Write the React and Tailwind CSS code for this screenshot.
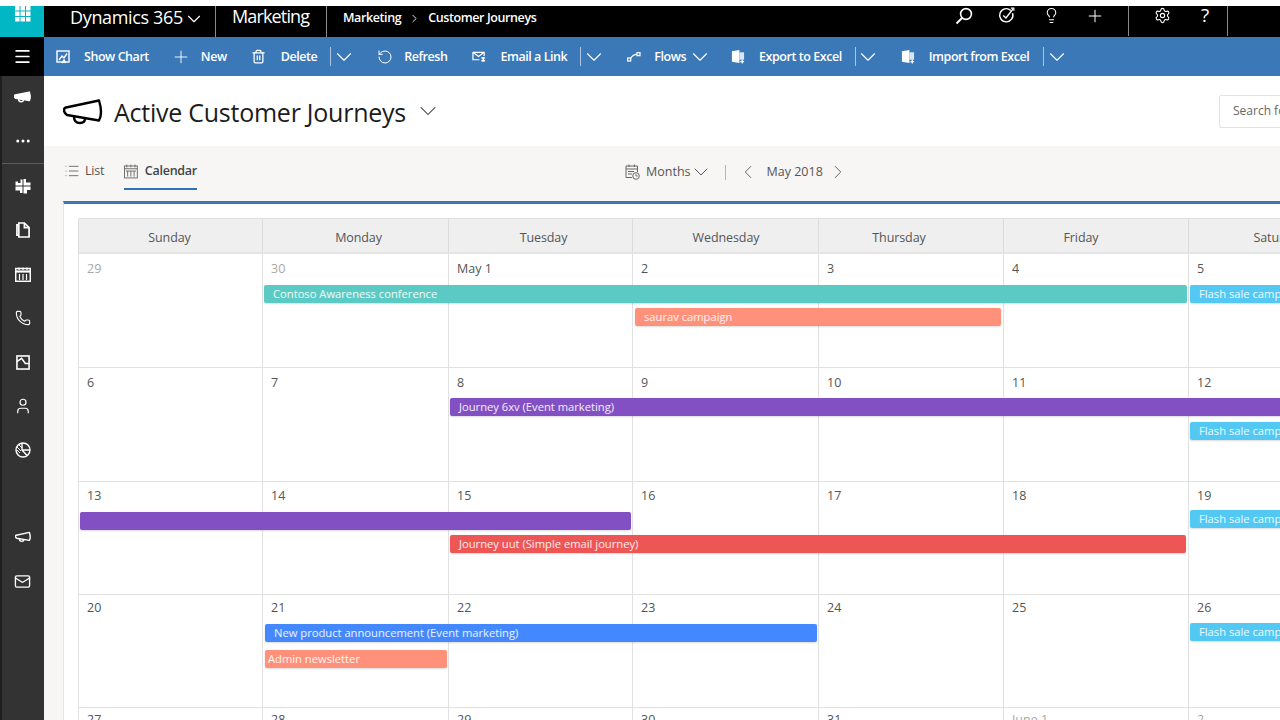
import React from 'react';
import {
  Plus, Trash2, RotateCcw, ChevronDown, ChevronLeft, ChevronRight, Lightbulb, Settings,
  Phone, User, Mail, Menu, List, Ellipsis,
} from 'lucide-react';

const ui = { fontFamily: '"Open Sans", "Noto Sans", sans-serif' };

function Horn({ className, weight = 2.4, fill = 'none' }) {
  return (
    <svg viewBox="0 0 40 26" fill={fill} stroke="currentColor" strokeWidth={weight} strokeLinejoin="round" className={className}>
      <path d="M3 8.5 L36 1.5 Q38 8 38 13 Q38 18 36 21.5 L4 16 Q1 14 1 11 Q1 9 3 8.5 Z" />
      <path d="M11 17.5 Q11 24 17 24 Q22 24 22 19.5" fill="none" />
    </svg>
  );
}

function Waffle() {
  return (
    <svg viewBox="0 0 16 16" className="w-4 h-4" fill="white">
      {[0, 5.5, 11].map((y) =>
        [0, 5.5, 11].map((x) => <rect key={x + '-' + y} x={x} y={y} width="4.5" height="4.5" />)
      )}
    </svg>
  );
}

function TopSearch() {
  return (
    <svg viewBox="0 0 18 18" fill="none" stroke="white" strokeWidth="1.6" className="w-[18px] h-[18px]">
      <circle cx="11" cy="7" r="5.4" />
      <path d="M7 11 L1.5 16.5" strokeWidth="1.9" />
    </svg>
  );
}

function TargetCheck() {
  return (
    <svg viewBox="0 0 18 18" fill="none" stroke="white" strokeWidth="1.5" className="w-[17px] h-[17px]">
      <path d="M13.5 3.6 A7 7 0 1 0 15.4 6.5" />
      <path d="M5.6 9 L8.4 11.6 L16 2" />
      <path d="M13.6 1.2 H16.8 V4" strokeWidth="1.2" />
    </svg>
  );
}

function ChartBox() {
  return (
    <svg viewBox="0 0 14 14" fill="none" stroke="white" strokeWidth="1.4" className="w-[14px] h-[14px]">
      <rect x="1" y="1" width="12" height="11" />
      <path d="M3 10 L6 6 L8 8 L11 3.5" />
      <path d="M6 13 L8 10 L10 13" fill="white" />
    </svg>
  );
}

function MailLink() {
  return (
    <svg viewBox="0 0 15 13" fill="none" stroke="white" strokeWidth="1.3" className="w-[15px] h-[13px]">
      <path d="M1 2 H13 V6" />
      <path d="M1 2 V10 H8" />
      <path d="M1 2 L7 6.5 L13 2" />
      <path d="M10 8 H14 M10 11 H14 M12 7 V12" strokeWidth="1.6" />
    </svg>
  );
}

function FlowIcon() {
  return (
    <svg viewBox="0 0 14 10" fill="none" stroke="white" strokeWidth="1.2" className="w-[14px] h-[10px]">
      <rect x="0.7" y="6" width="3" height="3" />
      <rect x="10" y="0.7" width="3" height="3" />
      <path d="M3.6 6.4 Q6 2.4 10 2.4" />
    </svg>
  );
}

function ExcelIcon() {
  return (
    <svg viewBox="0 0 15 15" className="w-[15px] h-[15px]">
      <path d="M1 2 L9 0.5 V14.5 L1 13 Z" fill="white" />
      <rect x="9" y="3" width="5" height="8" fill="#d9e6f3" />
      <path d="M10 13 H14 M12 11 V15" stroke="white" strokeWidth="1.3" />
    </svg>
  );
}

function PuzzleIcon() {
  return (
    <svg viewBox="0 0 16 16" className="w-4 h-4" fill="white">
      <path d="M0.5 3.5 H3 V5 H5.5 V1.5 H7.5 V7.5 H0.5 Z" />
      <path d="M8.5 1 H11 V4.5 H15.5 V7.5 H8.5 Z" />
      <path d="M0.5 8.5 H7.5 V15 H5 V12.5 H0.5 Z" />
      <path d="M8.5 8.5 H15.5 V12 H12 V15.5 H8.5 Z" />
    </svg>
  );
}

function FileIcon() {
  return (
    <svg viewBox="0 0 15 17" fill="none" stroke="white" strokeWidth="1.8" className="w-[14px] h-[16px]">
      <path d="M3 3 V1 H9 L14 6 V16 H3 V3 H1 V14 H3" />
      <path d="M9 1 V6 H14" />
    </svg>
  );
}

function SideCalendar() {
  return (
    <svg viewBox="0 0 16 15" fill="none" stroke="white" strokeWidth="1.5" className="w-4 h-[15px]">
      <rect x="0.7" y="1.5" width="14.6" height="12.8" />
      <path d="M0.7 4.5 H15.3" strokeWidth="2.2" />
      <path d="M4 0.5 V3 M8 0.5 V3 M12 0.5 V3 M4.5 7 V13 M8 7 V13 M11.5 7 V13" strokeWidth="1.2" />
    </svg>
  );
}

function ChartDoc() {
  return (
    <svg viewBox="0 0 15 16" fill="none" stroke="white" strokeWidth="1.7" className="w-[14px] h-[15px]">
      <rect x="1" y="1" width="13" height="14" />
      <path d="M1 7 L6 3.5 L10 9 H14" />
    </svg>
  );
}

function PieIcon() {
  return (
    <svg viewBox="0 0 16 16" fill="none" stroke="white" strokeWidth="1.4" className="w-4 h-4">
      <circle cx="8" cy="8" r="7" />
      <path d="M7 1 V8 L12 13.5 M7 8 H15" />
      <path d="M2 5 L6 9 M2 8 L5 11 M4 3 L7 6" strokeWidth="1" />
    </svg>
  );
}

function MonthsIcon() {
  return (
    <svg viewBox="0 0 15 16" fill="none" stroke="#666" strokeWidth="1" className="w-[15px] h-4">
      <path d="M7 13.5 H1 V2 H12.5 V8" />
      <path d="M1 5 H12.5 M4 0.5 V3 M9.5 0.5 V3 M3 7.5 H9 M3 10 H7" />
      <circle cx="11" cy="12" r="3.3" />
      <path d="M11 10.3 V12 H12.6" />
    </svg>
  );
}

function CalendarTabIcon() {
  return (
    <svg viewBox="0 0 15 15" fill="none" stroke="#666" strokeWidth="1" className="w-[15px] h-[15px]">
      <rect x="0.5" y="1.5" width="14" height="13" />
      <path d="M0.5 4.5 H14.5 M3 0 V3 M7.5 0 V3 M12 0 V3 M4 7 V13 M7.5 7 V13 M11 7 V13 M2 7 H13" />
    </svg>
  );
}

// wide, shallow chevron in a box smaller than the glyph, so layout stays on the box
function Caret({ Icon = ChevronDown, size = 26, stroke = 1, box = 'w-[17px] h-[17px]', className = '' }) {
  return (
    <span className={'flex items-center justify-center shrink-0 ' + box + ' ' + className}>
      <Icon size={size} strokeWidth={stroke} className="shrink-0" />
    </span>
  );
}

function Cmd({ icon, label, ml, gap }) {
  return (
    <div className={'flex items-center ' + ml}>
      <span className="w-[14px] flex justify-center">{icon}</span>
      <span className={gap + ' mt-[2px] text-[12.5px] text-white font-semibold tracking-[-0.45px] whitespace-nowrap'}>{label}</span>
    </div>
  );
}

function SplitCaret({ ml }) {
  return (
    <div className={'flex items-center text-white ' + ml}>
      <span className="w-px h-[19px] bg-[#a9c6e3]" />
      <Caret className="ml-[4px]" />
    </div>
  );
}

function TopBar() {
  return (
    <div className="flex h-[31px] bg-black text-white shrink-0">
      <div className="w-[44px] bg-[#00b7c3] flex justify-center pl-[1px] overflow-hidden">
        <Waffle />
      </div>
      <div className="w-[172px] flex items-start pl-[26px] border-r border-[#8a8a8a]">
        <span className="text-[18px] leading-[22px] tracking-[-0.35px] whitespace-nowrap" style={ui}>Dynamics 365</span>
        <Caret size={22} stroke={1.2} box="w-[12px] h-[12px]" className="ml-[5px] mt-[7px]" />
      </div>
      <div className="w-[111px] pl-[16px] border-r border-[#8a8a8a]">
        <span className="text-[18px] leading-[20px] tracking-[-0.85px] block" style={ui}>Marketing</span>
      </div>
      <div className="flex items-center pl-[16px] pb-[6px] text-[12.5px] font-semibold tracking-[-0.4px]" style={ui}>
        <span>Marketing</span>
        <ChevronRight size={13} strokeWidth={1.6} className="mx-[7px]" />
        <span>Customer Journeys</span>
      </div>
      <div className="ml-auto flex items-start w-[328px] pt-[1px] shrink-0">
        <span className="ml-[3px]"><TopSearch /></span>
        <span className="ml-[25px]"><TargetCheck /></span>
        <Lightbulb size={17} strokeWidth={1.5} className="ml-[28px]" />
        <Plus size={20} strokeWidth={1.2} className="ml-[25px] -mt-[1px]" />
        <span className="ml-[23px] w-px h-[30px] -mt-[1px] bg-[#8a8a8a]" />
        <Settings size={17} strokeWidth={1.6} className="ml-[25px]" />
        <span className="ml-[30px] text-[19px] leading-[19px] -mt-[1px]" style={ui}>?</span>
        <span className="ml-[18px] w-px h-[30px] -mt-[1px] bg-[#8a8a8a]" />
      </div>
    </div>
  );
}

function CommandBar() {
  return (
    <div className="flex h-[39px] shrink-0">
      <div className="w-[44px] bg-black flex items-center justify-center">
        <Menu size={19} strokeWidth={2.2} color="white" />
      </div>
      <div className="flex-1 bg-[#3b78b8] flex items-center text-white" style={ui}>
        <Cmd icon={<ChartBox />} label="Show Chart" ml="ml-[12px]" gap="ml-[14px]" />
        <Cmd icon={<Plus size={20} strokeWidth={1.1} color="white" className="shrink-0" />} label="New" ml="ml-[25px]" gap="ml-[13px]" />
        <Cmd icon={<Trash2 size={15} strokeWidth={2} color="white" className="shrink-0" />} label="Delete" ml="ml-[25px]" gap="ml-[15px]" />
        <SplitCaret ml="ml-[13px]" />
        <Cmd icon={<RotateCcw size={16} strokeWidth={1.5} color="white" className="shrink-0" />} label="Refresh" ml="ml-[26px]" gap="ml-[12px]" />
        <Cmd icon={<MailLink />} label="Email a Link" ml="ml-[25px]" gap="ml-[14px]" />
        <SplitCaret ml="ml-[13px]" />
        <Cmd icon={<FlowIcon />} label="Flows" ml="ml-[25px]" gap="ml-[13px]" />
        <Caret className="ml-[5px]" />
        <Cmd icon={<ExcelIcon />} label="Export to Excel" ml="ml-[23px]" gap="ml-[14px]" />
        <SplitCaret ml="ml-[13px]" />
        <Cmd icon={<ExcelIcon />} label="Import from Excel" ml="ml-[24px]" gap="ml-[14px]" />
        <SplitCaret ml="ml-[14px]" />
      </div>
    </div>
  );
}

function SideItem({ children }) {
  return <div className="h-11 flex items-center justify-center pr-[1px] text-white">{children}</div>;
}

function Sidebar() {
  return (
    <div className="w-[44px] shrink-0 bg-[#333333] border-l-2 border-[#1f1f1f] flex flex-col">
      <div className="-mt-[1px]"><SideItem><Horn className="w-[17px] h-[14px]" weight={3.5} fill="white" /></SideItem></div>
      <div className="h-[45px] flex items-center justify-center pr-[1px] text-white border-b border-[#5a5a5a]">
        <Ellipsis size={18} strokeWidth={2} />
      </div>
      <SideItem><PuzzleIcon /></SideItem>
      <SideItem><FileIcon /></SideItem>
      <SideItem><SideCalendar /></SideItem>
      <SideItem><Phone size={16} strokeWidth={1.7} /></SideItem>
      <SideItem><ChartDoc /></SideItem>
      <SideItem><User size={18} strokeWidth={1.6} /></SideItem>
      <SideItem><PieIcon /></SideItem>
      <div className="mt-[43px]"><SideItem><Horn className="w-4 h-3" weight={3.6} /></SideItem></div>
      <SideItem><Mail size={17} strokeWidth={1.9} /></SideItem>
    </div>
  );
}

function TitleRow() {
  return (
    <div className="h-[70px] shrink-0 flex items-center pl-[19px] text-black bg-white">
      <Horn className="w-[40px] h-[26px] mt-[2px]" />
      <h1 className="ml-[11px] mt-[2px] text-[25px] leading-[32px] tracking-[-0.25px] text-[#1c1c1c] whitespace-nowrap" style={ui}>
        Active Customer Journeys
      </h1>
      <Caret size={28} stroke={0.9} className="ml-[14px] text-[#333]" />
      <div className="ml-auto mr-[-39px] w-[100px] h-[33px] border border-[#e2e2e2] rounded-[2px] flex items-center pl-[13px] text-[12px] text-[#666] whitespace-nowrap overflow-hidden shrink-0">
        Search for records
      </div>
    </div>
  );
}

function ViewBar() {
  return (
    <div className="h-[55px] shrink-0 bg-[#f7f6f4] mr-[2px] flex items-center pl-[20px] text-[12.5px] text-[#555]" style={ui}>
      <div className="flex items-center w-[60px] -mt-[5px]">
        <List size={16} strokeWidth={1.2} />
        <span className="ml-[5px] tracking-[-0.2px]">List</span>
      </div>
      <div className="flex flex-col w-[73px] mt-[2px] border-b-2 border-[#2f75b5] h-[30px] justify-center pb-[5px]">
        <div className="flex items-center">
          <CalendarTabIcon />
          <span className="ml-[7px] font-semibold text-[#444] tracking-[-0.25px]">Calendar</span>
        </div>
      </div>
      <div className="ml-[428px] flex items-center -mt-[3px]">
        <MonthsIcon />
        <span className="ml-[6px]">Months</span>
        <Caret size={24} stroke={1} box="w-[15px] h-[15px]" className="ml-[3px]" />
        <span className="ml-[16px] w-px h-[15px] bg-[#b5b5b5]" />
        <Caret Icon={ChevronLeft} size={22} stroke={1} box="w-[15px] h-[15px]" className="ml-[15px]" />
        <span className="ml-[11px]">May 2018</span>
        <Caret Icon={ChevronRight} size={22} stroke={1} box="w-[15px] h-[15px]" className="ml-[8px]" />
      </div>
    </div>
  );
}

const cols = 'grid-cols-[184px_186px_184px_186px_185px_185px_185px]';

// the reference's captions are not centred in their cells, hence the per-day padding
const days = [
  { name: 'Sunday', pad: 'pr-[2px]' },
  { name: 'Monday', pad: 'pl-[6px]' },
  { name: 'Tuesday', pad: 'pl-[6px]' },
  { name: 'Wednesday', pad: 'pl-[1px]' },
  { name: 'Thursday', pad: 'pr-[24px]' },
  { name: 'Friday', pad: 'pr-[30px]' },
  { name: 'Saturday', pad: 'pr-[4px]' },
];

const weeks = [
  {
    rows: 'grid-rows-[31px_18px_5px_18px_1fr]',
    height: 'h-[114px]',
    pad: 'pt-[6px]',
    dates: [['29', true], ['30', true], ['May 1'], ['2'], ['3'], ['4'], ['5']],
    events: [
      { label: 'Contoso Awareness conference', color: 'bg-[#5ccac4]', cls: 'col-start-2 col-end-7 row-start-2 ml-[2px] mr-[1px]' },
      { label: 'Flash sale campaign', color: 'bg-[#52c8f3]', cls: 'col-start-7 col-end-8 row-start-2 ml-[2px]' },
      { label: 'saurav campaign', color: 'bg-[#ff917b]', cls: 'col-start-4 col-end-6 row-start-4 ml-[3px] mr-[2px]' },
    ],
  },
  {
    rows: 'grid-rows-[30px_18px_6px_18px_1fr]',
    height: 'h-[114px]',
    pad: 'pt-[6px]',
    dates: [['6'], ['7'], ['8'], ['9'], ['10'], ['11'], ['12']],
    events: [
      { label: 'Journey 6xv (Event marketing)', color: 'bg-[#8350c4]', cls: 'col-start-3 col-end-8 row-start-2 ml-[2px]' },
      { label: 'Flash sale campaign', color: 'bg-[#52c8f3]', cls: 'col-start-7 col-end-8 row-start-4 ml-[2px]' },
    ],
  },
  {
    rows: 'grid-rows-[28px_20px_5px_18px_1fr]',
    height: 'h-[113px]',
    pad: 'pt-[5px]',
    dates: [['13'], ['14'], ['15'], ['16'], ['17'], ['18'], ['19']],
    events: [
      { label: '', color: 'bg-[#8350c4] mt-[2px]', cls: 'col-start-1 col-end-4 row-start-2 ml-[2px] mr-[1px]' },
      { label: 'Flash sale campaign', color: 'bg-[#52c8f3]', cls: 'col-start-7 col-end-8 row-start-2 ml-[2px]' },
      { label: 'Journey uut (Simple email journey)', color: 'bg-[#ee5555]', cls: 'col-start-3 col-end-7 row-start-4 ml-[2px] mr-[2px]' },
    ],
  },
  {
    rows: 'grid-rows-[28px_19px_8px_18px_1fr]',
    height: 'h-[113px]',
    pad: 'pt-[4px]',
    dates: [['20'], ['21'], ['22'], ['23'], ['24'], ['25'], ['26']],
    events: [
      { label: 'New product announcement (Event marketing)', color: 'bg-[#4488ff] mt-[1px]', cls: 'col-start-2 col-end-5 row-start-2 ml-[3px] mr-[1px]' },
      { label: 'Flash sale campaign', color: 'bg-[#52c8f3]', cls: 'col-start-7 col-end-8 row-start-2 ml-[2px]' },
      { label: 'Admin newsletter', color: 'bg-[#ff917b] !pl-[3px]', cls: 'col-start-2 col-end-3 row-start-4 ml-[3px] mr-[1px]' },
    ],
  },
  {
    rows: 'grid-rows-[28px_1fr]',
    height: 'h-[40px]',
    pad: 'pt-[3px]',
    dates: [['27'], ['28'], ['29'], ['30'], ['31'], ['June 1', true], ['2', true]],
    events: [],
  },
];

function Week({ week }) {
  return (
    <div className={'grid ' + cols + ' ' + week.rows + ' ' + week.height + ' border-b border-[#e1e1e1]'}>
      {week.dates.map(([d, muted], i) => (
        <div
          key={i}
          style={{ gridColumnStart: i + 1 }}
          className={
            'row-start-1 row-end-6 border-l border-[#e1e1e1] pl-[8px] text-[12.5px] leading-[18px] ' +
            week.pad + ' ' + (muted ? 'text-[#a8a8a8]' : 'text-[#555]')
          }
        >
          {d}
        </div>
      ))}
      {week.events.map((ev, i) => (
        <div key={i} className={ev.cls + ' z-10 min-w-0'}>
          <div
            className={
              ev.color +
              ' h-[18px] rounded-[2px] pl-[9px] text-[11.2px] leading-[17px] text-white/90 overflow-hidden whitespace-nowrap shadow-[0_1px_2px_rgba(0,0,0,0.15)]'
            }
          >
            {ev.label}
          </div>
        </div>
      ))}
    </div>
  );
}

function Calendar() {
  return (
    <div className="flex-1 ml-[19px] border-t-[3px] border-[#3b78b8] border-l border-l-[#e5e5e5] bg-white pl-[14px] pt-[14px] overflow-hidden" style={ui}>
      <div className="w-[1295px] border-t border-[#e1e1e1]">
        <div className={'grid ' + cols + ' h-[35px] bg-[#efefef] border-b-2 border-[#e4e4e4]'}>
          {days.map((d) => (
            <div key={d.name} className="border-l border-[#dcdcdc] pt-[2px]">
              <div className={'h-full flex items-center justify-center text-[12.5px] tracking-[-0.1px] text-[#555] mt-[2px] ' + d.pad}>
                {d.name}
              </div>
            </div>
          ))}
        </div>
        {weeks.map((w, i) => <Week key={i} week={w} />)}
      </div>
    </div>
  );
}

export default function App() {
  return (
    <div className="w-[1280px] h-[720px] overflow-hidden bg-white flex flex-col pt-[6px]" style={ui}>
      <TopBar />
      <CommandBar />
      <div className="flex flex-1 min-h-0">
        <Sidebar />
        <div className="flex-1 min-w-0 flex flex-col bg-[#f7f6f4] overflow-hidden">
          <TitleRow />
          <ViewBar />
          <Calendar />
        </div>
      </div>
    </div>
  );
}
